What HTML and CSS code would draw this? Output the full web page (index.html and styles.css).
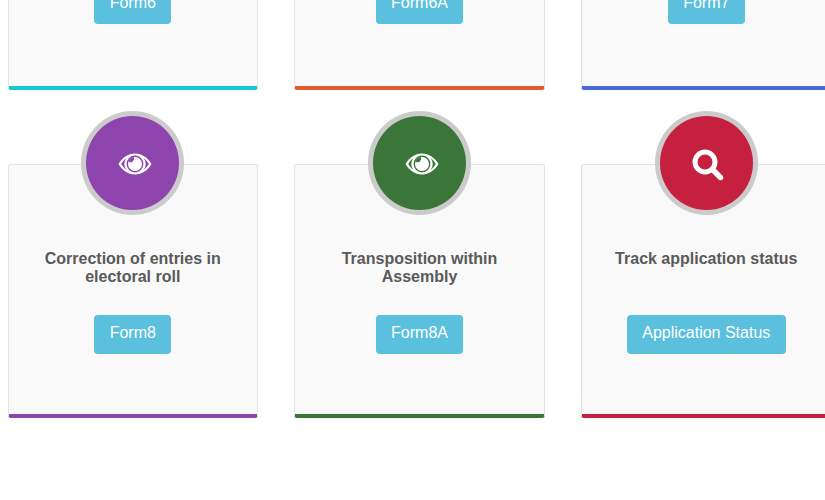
FILE: index.html
```html
<!DOCTYPE html>
<html lang="en">
<head>
  <meta charset="UTF-8" />
  <title>Voter Forms</title>
  <link rel="stylesheet" href="styles.css">
</head>
<body>
  <svg class="icon-defs" width="0" height="0" aria-hidden="true">
    <symbol id="icon-eye" viewBox="0 0 34 24">
      <path fill="#fff" fill-rule="evenodd" d="M17 1.500C10 1.500 4 6 .5 12c3.500 6 9.500 10.500 16.500 10.500S30 18 33.500 12C30 6 24 1.500 17 1.500zM8.500 6a10 10 0 0 0 0 12A19 19 0 0 1 3.200 12 19 19 0 0 1 8.500 6zM25.500 6A19 19 0 0 1 30.800 12 19 19 0 0 1 25.500 18a10 10 0 0 0 0-12zM17 3.600a8.400 8.400 0 1 1 0 16.800 8.400 8.400 0 0 1 0-16.800z"/>
      <circle fill="#fff" cx="17" cy="12" r="7"/>
      <path fill="currentColor" d="M10.500 9.600A7 7 0 0 1 15.800 5.100 3.600 3.600 0 0 1 10.500 9.600z"/>
    </symbol>
    <symbol id="icon-search" viewBox="0 0 32 32">
      <circle cx="13" cy="13" r="10" fill="none" stroke="#fff" stroke-width="5"/>
      <path d="M20.500 20.500L28.500 28.500" fill="none" stroke="#fff" stroke-width="5.400" stroke-linecap="round"/>
    </symbol>
  </svg>

  <main class="form-grid">
    <section class="form-card row-first card-teal">
      <h3>Registration of new voter</h3>
      <a href="#" class="btn-form">Form6</a>
    </section>
    <section class="form-card row-first card-orange">
      <h3>Registration of overseas voter</h3>
      <a href="#" class="btn-form">Form6A</a>
    </section>
    <section class="form-card row-first card-blue">
      <h3>Deletion of name in roll</h3>
      <a href="#" class="btn-form">Form7</a>
    </section>

    <section class="form-card card-purple">
      <div class="card-icon"><svg class="icon-eye"><use href="#icon-eye"/></svg></div>
      <h3>Correction of entries in electoral roll</h3>
      <a href="#" class="btn-form">Form8</a>
    </section>
    <section class="form-card card-green">
      <div class="card-icon"><svg class="icon-eye"><use href="#icon-eye"/></svg></div>
      <h3>Transposition within Assembly</h3>
      <a href="#" class="btn-form">Form8A</a>
    </section>
    <section class="form-card card-red">
      <div class="card-icon"><svg class="icon-search"><use href="#icon-search"/></svg></div>
      <h3>Track application status</h3>
      <a href="#" class="btn-form">Application Status</a>
    </section>
  </main>
</body>
</html>
```

FILE: styles.css
```css
* {
  margin: 0;
  padding: 0;
  box-sizing: border-box;
}

html,
body {
  height: 500px;
  overflow: hidden;
  background: #fff;
}

body {
  font-family: 'Liberation Sans', Arial, sans-serif;
}

.icon-defs {
  display: block;
}

/* The shot starts part way down the page, so the first row is cut off */
.form-grid {
  display: grid;
  grid-template-columns: repeat(3, 250.5px);
  column-gap: 36.25px;
  row-gap: 74px;
  margin-top: -164px;
  padding-left: 7.5px;
}

.form-card {
  --accent: #5bc0de;
  position: relative;
  display: flex;
  flex-direction: column;
  align-items: center;
  height: 254px;
  padding: 85px 20px 0;
  background: #f9f9f9;
  border: 1px solid #e4e4e4;
  border-bottom: 4px solid var(--accent);
  border-radius: 3px;
  text-align: center;
}

.row-first {
  padding-top: 83px;
}

.form-card h3 {
  min-height: 36px;
  margin-bottom: 29px;
  font-size: 16px;
  font-weight: 700;
  line-height: 18px;
  color: #5a5a5a;
}

.btn-form {
  display: block;
  height: 39px;
  padding: 8px 15.5px;
  background: #5bc0de;
  border-radius: 4px;
  font-size: 16px;
  line-height: 20px;
  color: #fff;
  text-decoration: none;
}

.card-icon {
  position: absolute;
  top: -54px;
  left: 50%;
  width: 103px;
  height: 104px;
  margin-left: -51.5px;
  display: flex;
  align-items: center;
  justify-content: center;
  background: var(--accent);
  border: 5px solid #cbcbcb;
  border-radius: 50%;
  color: var(--accent);
}

.icon-eye {
  width: 34px;
  height: 24px;
  margin: 2px 0 0 5px;
}

.icon-search {
  width: 32px;
  height: 32px;
  margin: 3px 0 0 3px;
}

.card-teal { --accent: #17c9cf; }
.card-orange { --accent: #e05d34; }
.card-blue { --accent: #4a6bd6; }
.card-purple { --accent: #8e44ad; }
.card-green { --accent: #3a7539; }
.card-red { --accent: #c5203f; }
```
